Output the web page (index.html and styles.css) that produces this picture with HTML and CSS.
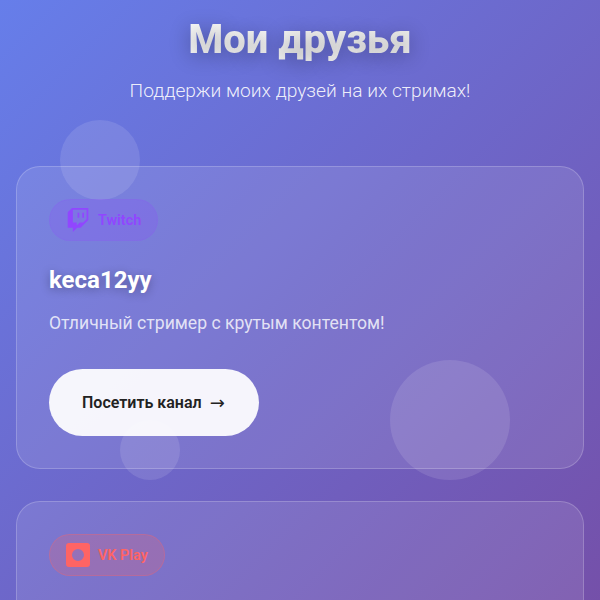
FILE: index.html
```html
<!DOCTYPE html>
<html lang="ru">
<head>
<meta charset="utf-8">
<title>Мои друзья</title>
<link rel="stylesheet" href="styles.css">
</head>
<body>
<div class="bubble bubble-a"></div>
<div class="bubble bubble-b"></div>
<div class="bubble bubble-c"></div>
<main class="page">
  <header class="hero">
    <h1 class="title">Мои друзья</h1>
    <p class="subtitle">Поддержи моих друзей на их стримах!</p>
  </header>
  <section class="friends">
    <article class="card">
      <div class="badge badge-twitch">
        <svg class="badge-icon" viewBox="0 0 24 24" aria-hidden="true"><path d="M11.571 4.714h1.715v5.143H11.57zm4.715 0H18v5.143h-1.714zM6 0L1.714 4.286v15.428h5.143V24l4.286-4.286h3.428L22.286 12V0zm14.571 11.143l-3.428 3.428h-3.429l-3 3v-3H6.857V1.714h13.714Z"/></svg>
        <span>Twitch</span>
      </div>
      <h2 class="name">keca12yy</h2>
      <p class="desc">Отличный стример с крутым контентом!</p>
      <a class="button" href="#"><span>Посетить канал</span><span class="arrow">→</span></a>
    </article>
    <article class="card">
      <div class="badge badge-vk">
        <svg class="badge-icon" viewBox="0 0 24 24" aria-hidden="true"><path fill-rule="evenodd" d="M3 0h18a3 3 0 0 1 3 3v18a3 3 0 0 1-3 3H3a3 3 0 0 1-3-3V3a3 3 0 0 1 3-3zm9 6a6 6 0 1 0 0 12 6 6 0 0 0 0-12z"/></svg>
        <span>VK Play</span>
      </div>
    </article>
  </section>
</main>
</body>
</html>
```
FILE: styles.css
```css
* { box-sizing: border-box; margin: 0; padding: 0; }
body {
  height: 600px;
  overflow: hidden;
  font-family: Roboto, "Noto Sans", sans-serif;
  color: #fff;
  background: linear-gradient(135deg, #667eea 0%, #764ba2 111%) fixed;
}
.page { position: relative; padding: 16px 16px 0; }
.hero { text-align: center; margin-bottom: 64px; }
.title {
  display: inline-block;
  font-size: 40px;
  line-height: 47px;
  font-weight: 800;
  background: linear-gradient(45deg, #fff, #f0f0f0);
  -webkit-background-clip: text;
  background-clip: text;
  -webkit-text-fill-color: transparent;
  text-shadow: 0 4px 20px rgba(0, 0, 0, .3);
  margin-bottom: 16px;
}
.subtitle {
  font-size: 19.2px;
  line-height: 23px;
  font-weight: 300;
  color: rgba(255, 255, 255, .9);
}
.friends { display: flex; flex-direction: column; gap: 32px; }
.card {
  border-radius: 24px;
  border: 1px solid rgba(255, 255, 255, .2);
  background: rgba(255, 255, 255, .1);
  padding: 32px;
  min-height: 303px;
}
.badge {
  display: inline-flex;
  align-items: center;
  gap: 8px;
  padding: 8px 16px;
  border-radius: 21px;
  border: 1px solid transparent;
  font-size: 14.4px;
  font-weight: 600;
  margin-bottom: 25px;
}
.badge-icon { display: block; width: 24px; height: 24px; fill: currentColor; }
.badge-twitch { color: #9146ff; background: rgba(145, 70, 255, .2); border-color: rgba(145, 70, 255, .1); }
.badge-vk { color: #ff6464; background: rgba(255, 100, 100, .2); border-color: rgba(255, 100, 100, .3); }
.name {
  font-size: 24px;
  line-height: 28px;
  font-weight: 700;
  text-shadow: 0 2px 10px rgba(0, 0, 0, .3);
  margin-bottom: 16px;
}
.desc {
  font-size: 17.6px;
  line-height: 27px;
  color: rgba(255, 255, 255, .8);
  margin-bottom: 32px;
}
.button {
  display: inline-flex;
  align-items: center;
  gap: 8px;
  height: 67px;
  padding: 0 33px;
  border-radius: 34px;
  background: rgba(255, 255, 255, .93);
  color: #222;
  font-size: 16px;
  font-weight: 600;
  text-decoration: none;
}
.arrow { width: 16px; font-size: 18px; font-family: "DejaVu Sans", sans-serif; font-weight: 400; }
.bubble { position: absolute; border-radius: 50%; background: rgba(255, 255, 255, .115); }
.bubble-a { left: 60px; top: 120px; width: 80px; height: 80px; }
.bubble-b { left: 390px; top: 360px; width: 120px; height: 120px; }
.bubble-c { left: 120px; top: 420px; width: 60px; height: 60px; }
```
